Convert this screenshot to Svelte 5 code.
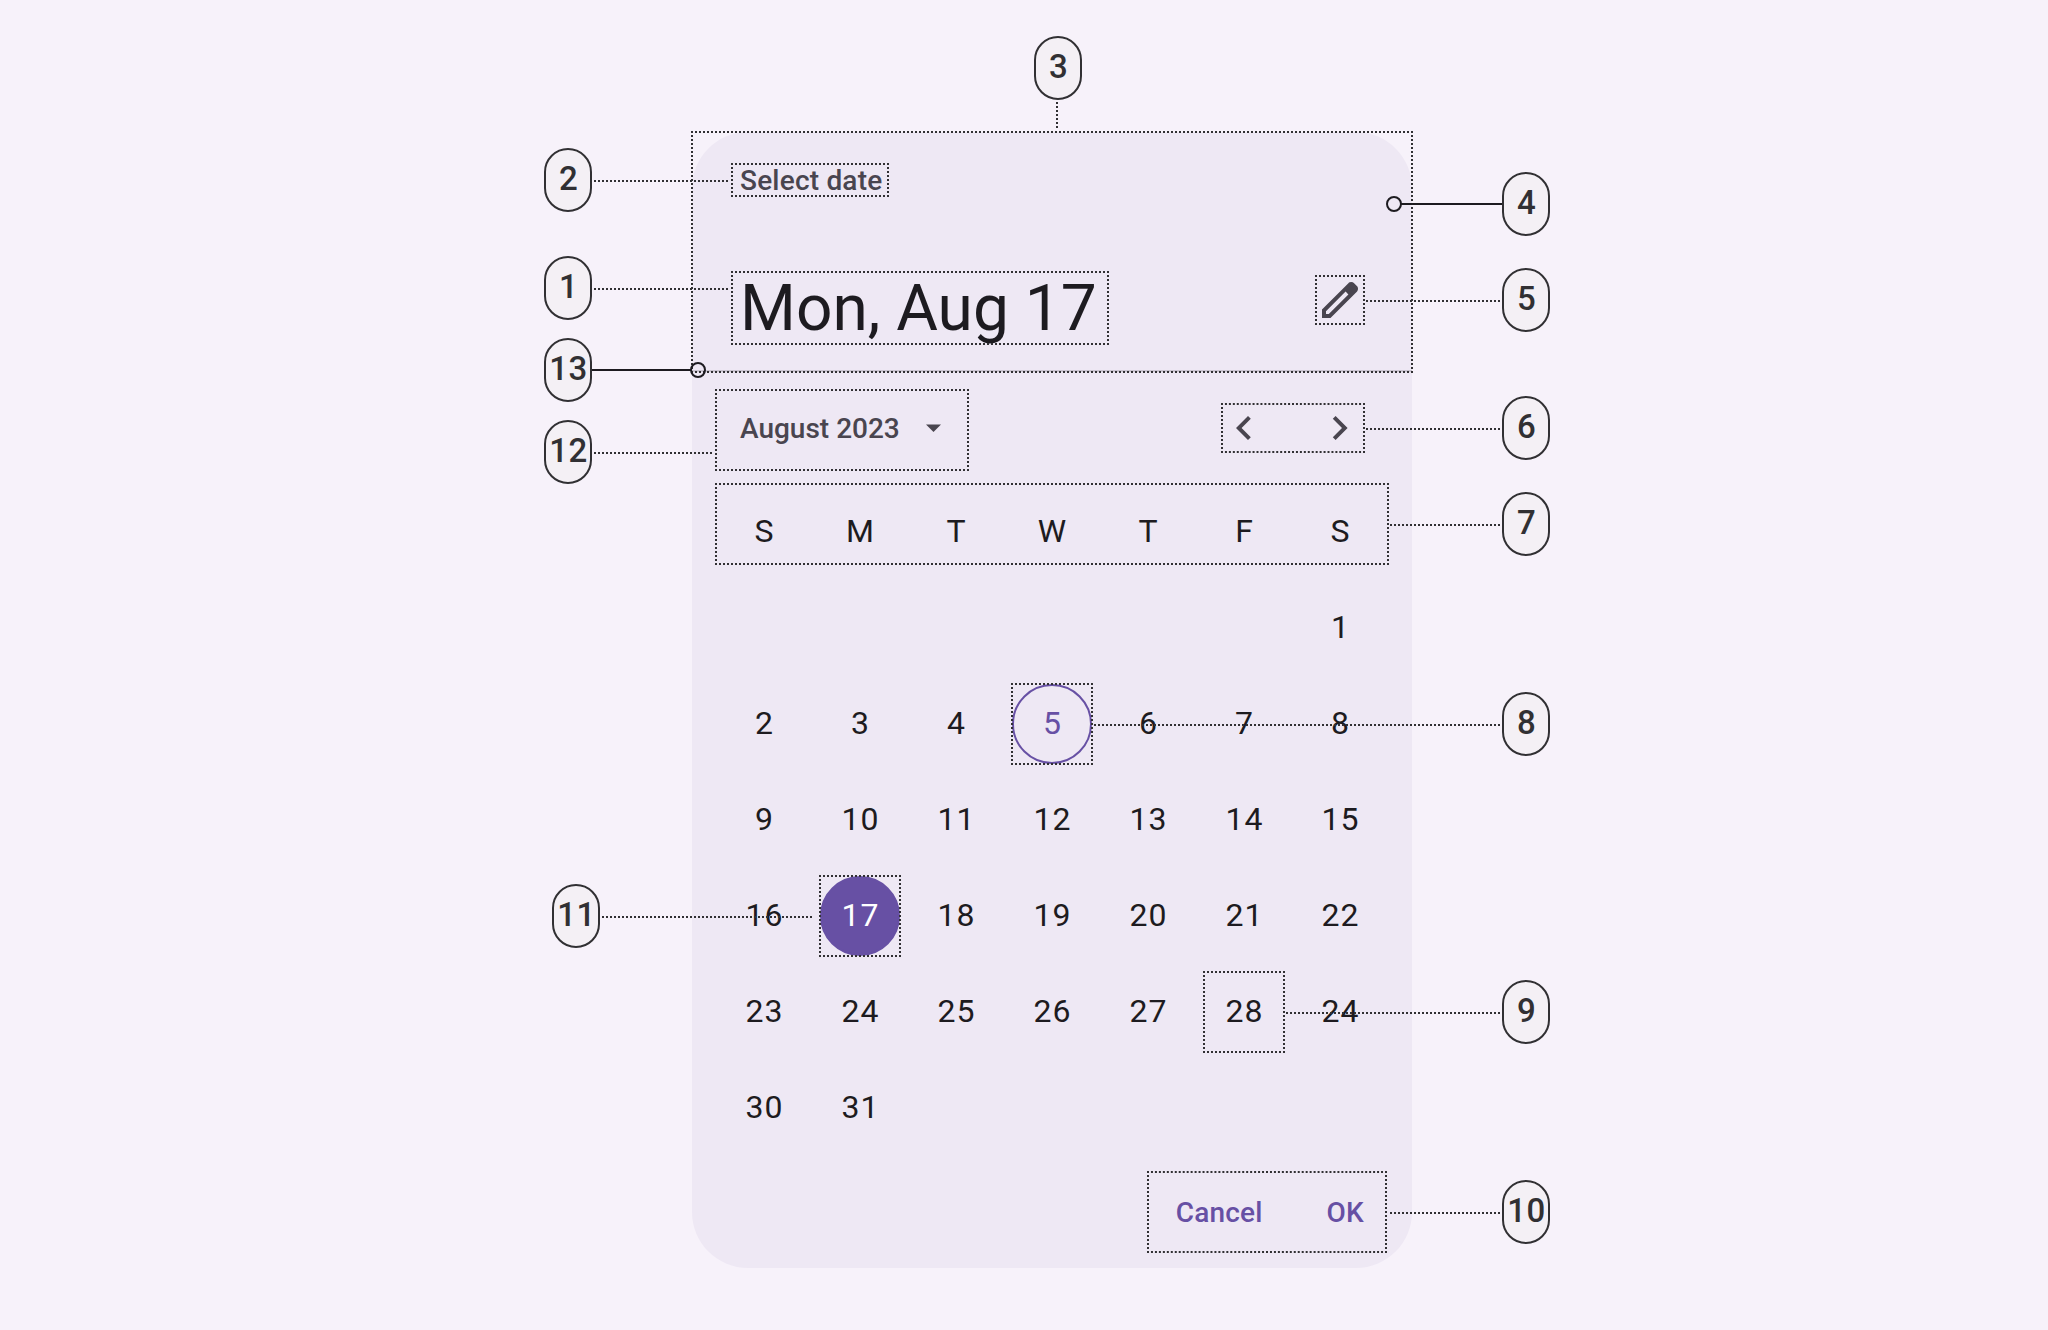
<script>
  const weekdays = ['S', 'M', 'T', 'W', 'T', 'F', 'S'];
  const days = [
    '', '', '', '', '', '', '1',
    '2', '3', '4', '5', '6', '7', '8',
    '9', '10', '11', '12', '13', '14', '15',
    '16', '17', '18', '19', '20', '21', '22',
    '23', '24', '25', '26', '27', '28', '24',
    '30', '31', '', '', '', '', ''
  ];
  const today = '5';
  const selected = '17';

  // Numbered callouts pinned on the diagram canvas
  const badges = [
    { n: 3, x: 1034, y: 36 },
    { n: 2, x: 544, y: 148 },
    { n: 1, x: 544, y: 256 },
    { n: 13, x: 544, y: 338 },
    { n: 12, x: 544, y: 420 },
    { n: 11, x: 552, y: 884 },
    { n: 4, x: 1502, y: 172 },
    { n: 5, x: 1502, y: 268 },
    { n: 6, x: 1502, y: 396 },
    { n: 7, x: 1502, y: 492 },
    { n: 8, x: 1502, y: 692 },
    { n: 9, x: 1502, y: 980 },
    { n: 10, x: 1502, y: 1180 }
  ];

  // Dotted outlines: left, top, right, bottom
  const boxes = [
    [692, 132, 1412, 372],
    [732, 164, 888, 196],
    [732, 272, 1108, 344],
    [1316, 276, 1364, 324],
    [1222, 404, 1364, 452],
    [716, 390, 968, 470],
    [716, 484, 1388, 564],
    [1012, 684, 1092, 764],
    [820, 876, 900, 956],
    [1204, 972, 1284, 1052],
    [1148, 1172, 1386, 1252]
  ];
  const sides = boxes.flatMap(([l, t, r, b]) => {
    const h = (r - l) / Math.round((r - l) / 4) - 2;
    const v = (b - t) / Math.round((b - t) / 4) - 2;
    return [
      { x1: l - 1, y1: t, x2: r + 1, y2: t, dash: `2 ${h}` },
      { x1: l - 1, y1: b, x2: r + 1, y2: b, dash: `2 ${h}` },
      { x1: l, y1: t - 1, x2: l, y2: b + 1, dash: `2 ${v}` },
      { x1: r, y1: t - 1, x2: r, y2: b + 1, dash: `2 ${v}` }
    ];
  });

  // Dotted leader lines: x1, y1, x2, y2
  const leaders = [
    [1057, 102, 1057, 128],
    [594, 181, 728, 181],
    [594, 289, 728, 289],
    [594, 453, 712, 453],
    [602, 917, 812, 917],
    [1366, 301, 1500, 301],
    [1366, 429, 1500, 429],
    [1390, 525, 1500, 525],
    [1094, 725, 1500, 725],
    [1286, 1013, 1500, 1013],
    [1390, 1213, 1500, 1213]
  ];
</script>

<main class="canvas">
  <section class="card">
    <header class="head">
      <div class="label">Select date</div>
      <div class="headline">
        <h1>Mon, Aug 17</h1>
        <svg class="icon" viewBox="0 0 24 24" aria-hidden="true">
          <path fill-rule="evenodd" d="M3 21v-4.25L16.2 3.575q.3-.275.663-.425.362-.15.762-.15t.775.15q.375.15.65.45L20.425 5q.3.275.437.65.138.375.138.75 0 .4-.138.763-.137.362-.437.662L7.25 21ZM5 19h1.4L16.2 9.2 14.8 7.8 5 17.6Z" />
        </svg>
      </div>
    </header>

    <div class="month">
      <div class="picker">
        <span>August 2023</span>
        <svg class="caret" viewBox="0 0 15 8" aria-hidden="true"><path d="M0 0.6h15L7.5 8z" /></svg>
      </div>
      <div class="nav">
        <svg class="icon" viewBox="0 0 24 24" aria-hidden="true"><path d="M14 18l-6-6 6-6 1.4 1.4L10.8 12l4.6 4.6z" /></svg>
        <svg class="icon" viewBox="0 0 24 24" aria-hidden="true"><path d="M13 12 8.4 7.4 9.8 6l6 6-6 6L8.4 16.6z" /></svg>
      </div>
    </div>

    <div class="grid">
      {#each weekdays as d}
        <div class="cell"><span class="day">{d}</span></div>
      {/each}
      {#each days as d}
        <div class="cell">
          {#if d}
            <span class="day" class:today={d === today} class:selected={d === selected}>{d}</span>
          {/if}
        </div>
      {/each}
    </div>

    <footer class="actions">
      <span>Cancel</span>
      <span>OK</span>
    </footer>
  </section>

  <svg class="overlay" viewBox="0 0 2048 1330" width="2048" height="1330" aria-hidden="true">
    <g class="dots">
      {#each sides as s}
        <line x1={s.x1} y1={s.y1} x2={s.x2} y2={s.y2} stroke-dasharray={s.dash} />
      {/each}
      {#each leaders as [x1, y1, x2, y2]}
        <line {x1} {y1} {x2} {y2} stroke-dasharray="2 2" />
      {/each}
    </g>
    <g class="solid">
      <line x1="592" y1="370" x2="691" y2="370" />
      <circle cx="698" cy="370" r="7" />
      <line x1="1401" y1="204" x2="1502" y2="204" />
      <circle cx="1394" cy="204" r="7" />
    </g>
  </svg>

  {#each badges as b}
    <div class="badge" style="left: {b.x}px; top: {b.y}px">{b.n}</div>
  {/each}
</main>

<style>
  :global(body) {
    background: #f7f2fa;
  }
  .canvas {
    position: relative;
    box-sizing: border-box;
    width: 2048px;
    height: 1330px;
    padding: 132px 0 0 692px;
    overflow: hidden;
    background: #f7f2fa;
    font-family: Roboto, sans-serif;
    color: #1d1b20;
  }
  .card {
    display: flex;
    flex-direction: column;
    width: 720px;
    height: 1136px;
    border-radius: 56px;
    background: #eee8f4;
  }
  .head {
    display: flex;
    flex-direction: column;
    justify-content: space-between;
    box-sizing: border-box;
    height: 240px;
    padding: 29px 48px 26px;
    border-bottom: 2px solid #cac4d0;
  }
  .label,
  .picker,
  .actions {
    font-size: 28px;
    font-weight: 500;
    line-height: 40px;
    letter-spacing: 0.2px;
    color: #49454f;
  }
  .headline {
    display: flex;
    justify-content: space-between;
    height: 80px;
  }
  h1 {
    margin: 0;
    padding-top: 5px;
    font-size: 64px;
    font-weight: 400;
    line-height: 80px;
  }
  .icon {
    width: 48px;
    height: 48px;
    fill: #49454f;
  }
  .headline .icon {
    margin-top: 12px;
  }
  .month {
    display: flex;
    align-items: center;
    justify-content: space-between;
    height: 112px;
    padding: 0 48px;
  }
  .picker {
    display: flex;
    align-items: center;
    gap: 26px;
    letter-spacing: 0;
  }
  .picker span,
  .actions span {
    padding-top: 2px;
  }
  .caret {
    width: 15px;
    height: 8px;
    fill: #49454f;
  }
  .nav {
    display: flex;
    gap: 48px;
  }
  .grid {
    display: grid;
    grid-template-columns: repeat(7, 96px);
    grid-auto-rows: 96px;
    padding: 0 24px;
  }
  .cell {
    display: flex;
    align-items: center;
    justify-content: center;
  }
  .day {
    box-sizing: border-box;
    width: 80px;
    height: 80px;
    padding-left: 1px;
    border: 2px solid transparent;
    border-radius: 50%;
    font-size: 32px;
    line-height: 75px;
    letter-spacing: 1px;
    text-align: center;
  }
  .today {
    border-color: #6750a4;
    color: #6750a4;
  }
  .selected {
    border-color: #6750a4;
    background: #6750a4;
    color: #ffffff;
  }
  .actions {
    display: flex;
    align-items: center;
    justify-content: flex-end;
    gap: 64px;
    height: 112px;
    padding-right: 48px;
    color: #6750a4;
  }
  .overlay {
    position: absolute;
    inset: 0;
    fill: none;
    stroke-width: 2;
  }
  .dots {
    stroke: #313033;
  }
  .solid {
    stroke: #1d1b20;
  }
  .badge {
    position: absolute;
    box-sizing: border-box;
    display: flex;
    justify-content: center;
    width: 48px;
    height: 64px;
    padding-left: 1px;
    border: 2px solid #313033;
    border-radius: 24px;
    background: #f4f0f5;
    color: #313033;
    font-size: 33px;
    font-weight: 500;
    letter-spacing: 0.4px;
    line-height: 57px;
  }
</style>
